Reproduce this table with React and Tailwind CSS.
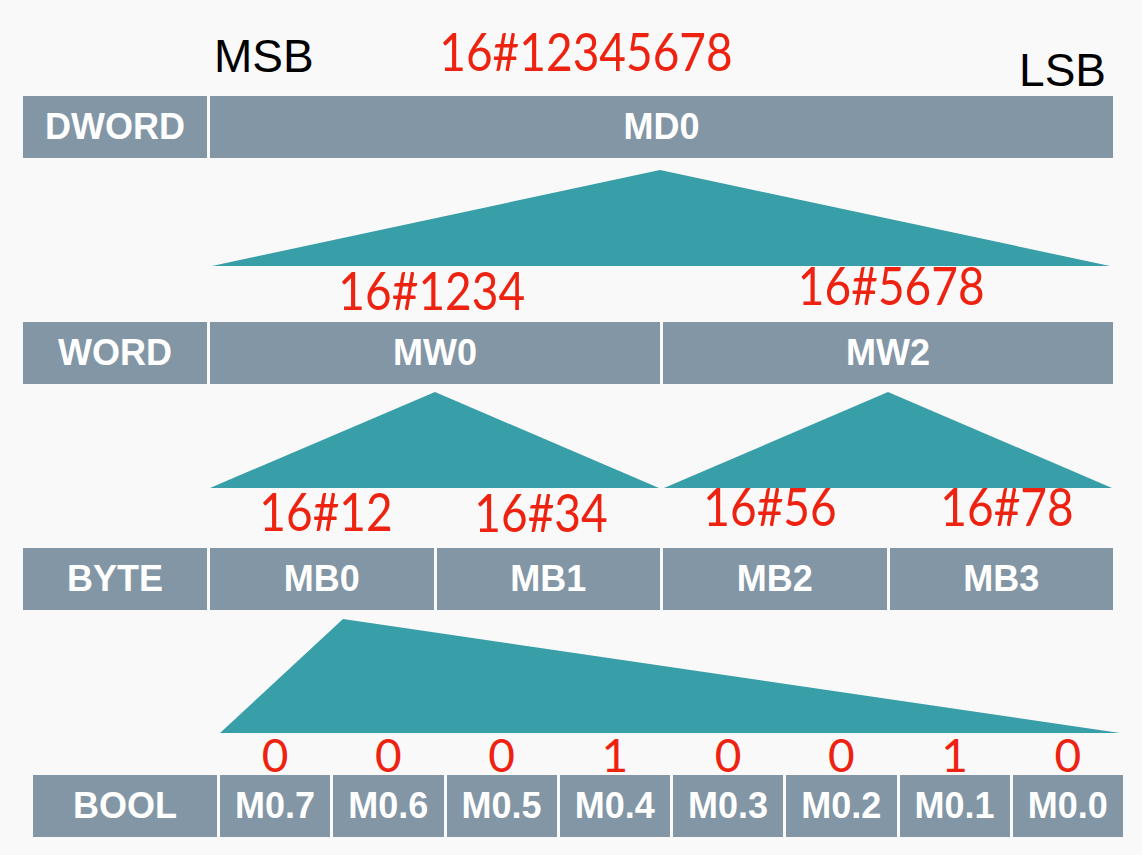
import React from "react";

const bar = "bg-[#8296a6] flex items-center justify-center text-white font-bold text-[36px] leading-none";
const sans = { fontFamily: '"Liberation Sans", Arial, sans-serif' };
const red = "text-[#ee2210] text-[46px] leading-none";
const redFont = { fontFamily: 'Lato, "Open Sans", sans-serif' };

function Row({ label, cells, className }) {
  return (
    <div className={"flex h-[62px] w-[1090px] gap-[3px] " + className} style={sans}>
      <div className={bar + " w-[184px] shrink-0"}>{label}</div>
      {cells.map((c) => (
        <div key={c} className={bar + " flex-1"}>{c}</div>
      ))}
    </div>
  );
}

function Hex({ children, className = "" }) {
  return (
    <div className={"flex-1 flex justify-center " + className}>
      <span className={red + " inline-block origin-bottom scale-y-[1.12]"} style={redFont}>{children}</span>
    </div>
  );
}

export default function App() {
  return (
    <div className="w-[1142px] h-[855px] bg-[#f9f9f9] overflow-hidden">
      {/* header */}
      <div className="flex h-[96px] items-start pl-[214px] pr-[36px]" style={sans}>
        <div className="w-[222px] mt-[33px] text-[46px] leading-none text-black">MSB</div>
        <div className="w-[300px] mt-[32px] flex justify-center">
          <span className={red + " inline-block origin-bottom scale-y-[1.12]"} style={redFont}>16#12345678</span>
        </div>
        <div className="ml-auto mt-[47px] text-[46px] leading-none text-black">LSB</div>
      </div>

      <Row label="DWORD" cells={["MD0"]} className="ml-[23px]" />

      {/* section 1 */}
      <svg width="1142" height="108" className="block">
        <polygon points="212,108 660,12 1110,108" fill="#389ea8" />
      </svg>
      <div className="flex h-[56px] ml-[210px] w-[903px]">
        <Hex className="mt-[5px]">16#1234</Hex>
        <Hex className="mt-[1px] pl-[16px]">16#5678</Hex>
      </div>

      <Row label="WORD" cells={["MW0", "MW2"]} className="ml-[23px]" />

      {/* section 2 */}
      <svg width="1142" height="104" className="block">
        <polygon points="210,104 435,8 659,104" fill="#389ea8" />
        <polygon points="664,104 888,8 1112,104" fill="#389ea8" />
      </svg>
      <div className="flex h-[60px] ml-[210px] w-[903px] gap-[3px]">
        <Hex className="mt-[5px] pl-[10px]">16#12</Hex>
        <Hex className="mt-[6px] pr-[14px]">16#34</Hex>
        <Hex className="mt-[0px] pr-[14px]">16#56</Hex>
        <Hex className="mt-[0px] pl-[8px]">16#78</Hex>
      </div>

      <Row label="BYTE" cells={["MB0", "MB1", "MB2", "MB3"]} className="ml-[23px]" />

      {/* section 3 */}
      <svg width="1142" height="123" className="block">
        <polygon points="220,123 343,9 1120,123" fill="#389ea8" />
      </svg>
      <div className="flex h-[42px] ml-[220px] w-[903px] gap-[3px]">
        {["0", "0", "0", "1", "0", "0", "1", "0"].map((d, i) => (
          <div key={i} className="flex-1 flex justify-center">
            <span className={red + " -mt-[1px]"} style={redFont}>{d}</span>
          </div>
        ))}
      </div>

      <Row
        label="BOOL"
        cells={["M0.7", "M0.6", "M0.5", "M0.4", "M0.3", "M0.2", "M0.1", "M0.0"]}
        className="ml-[33px]"
      />
    </div>
  );
}
